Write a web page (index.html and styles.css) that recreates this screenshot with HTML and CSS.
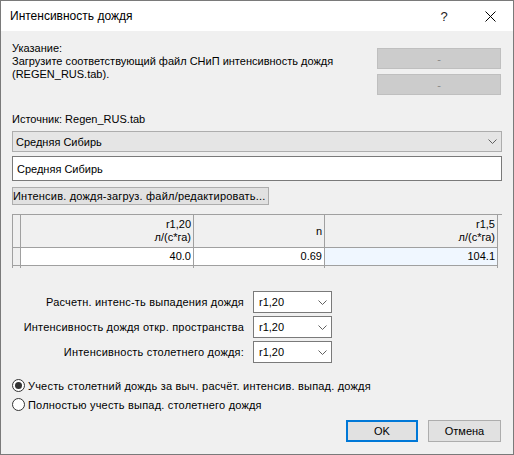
FILE: index.html
```html
<!DOCTYPE html>
<html lang="ru">
<head>
    <meta charset="UTF-8">
    <title>Интенсивность дождя</title>
    <link rel="stylesheet" href="styles.css">
</head>
<body>

    <div class="window">

        <!-- Title Bar -->
        <div class="titlebar">
            <div class="title">Интенсивность дождя</div>
            <div class="caption-btn help">?</div>
            <div class="caption-btn close">
                <svg width="11" height="11" viewBox="0 0 11 11">
                    <path d="M0.5 0.5 L10.5 10.5 M10.5 0.5 L0.5 10.5" stroke="#000" stroke-width="1" fill="none"/>
                </svg>
            </div>
        </div>

        <div class="content">

            <!-- Hint -->
            <div class="hint-row">
                <div class="hint">
                    Указание:<br>
                    Загрузите соответствующий файл СНиП интенсивность дождя<br>
                    (REGEN_RUS.tab).
                </div>
                <div class="side-buttons">
                    <div class="btn-disabled">-</div>
                    <div class="btn-disabled">-</div>
                </div>
            </div>

            <div class="source">Источник: Regen_RUS.tab</div>

            <div class="combo">
                <span>Средняя Сибирь</span>
                <svg class="chevron" width="9" height="5" viewBox="0 0 9 5">
                    <path d="M0.5 0.5 L4.5 4.5 L8.5 0.5" stroke="#606060" fill="none"/>
                </svg>
            </div>

            <div class="textbox">Средняя Сибирь</div>

            <div class="load-btn">Интенсив. дождя-загруз. файл/редактировать...</div>

            <!-- Grid -->
            <div class="grid">
                <div class="cell rowhead"></div>
                <div class="cell head">r1,20<br>л/(с*га)</div>
                <div class="cell head">n</div>
                <div class="cell head">r1,5<br>л/(с*га)</div>

                <div class="cell rowhead"></div>
                <div class="cell data">40.0</div>
                <div class="cell data">0.69</div>
                <div class="cell data current">104.1</div>

                <div class="cell tail"></div>
                <div class="cell tail"></div>
                <div class="cell tail"></div>
                <div class="cell tail"></div>
            </div>

            <!-- Options -->
            <div class="options">
                <div class="opt-label">Расчетн. интенс-ть выпадения дождя</div>
                <div class="select">
                    <span>r1,20</span>
                    <svg width="9" height="5" viewBox="0 0 9 5"><path d="M0.5 0.5 L4.5 4.5 L8.5 0.5" stroke="#606060" fill="none"/></svg>
                </div>

                <div class="opt-label">Интенсивность дождя откр. пространства</div>
                <div class="select">
                    <span>r1,20</span>
                    <svg width="9" height="5" viewBox="0 0 9 5"><path d="M0.5 0.5 L4.5 4.5 L8.5 0.5" stroke="#606060" fill="none"/></svg>
                </div>

                <div class="opt-label">Интенсивность столетнего дождя:</div>
                <div class="select">
                    <span>r1,20</span>
                    <svg width="9" height="5" viewBox="0 0 9 5"><path d="M0.5 0.5 L4.5 4.5 L8.5 0.5" stroke="#606060" fill="none"/></svg>
                </div>
            </div>

            <!-- Radios -->
            <div class="radios">
                <div class="radio">
                    <span class="dot checked"></span>
                    Учесть столетний дождь за выч. расчёт. интенсив. выпад. дождя
                </div>
                <div class="radio">
                    <span class="dot"></span>
                    Полностью учесть выпад. столетнего дождя
                </div>
            </div>

            <!-- Dialog Buttons -->
            <div class="footer">
                <div class="btn ok">OK</div>
                <div class="btn">Отмена</div>
            </div>

        </div>
    </div>

</body>
</html>
```

FILE: styles.css
```css
* {
    margin: 0;
    padding: 0;
    box-sizing: border-box;
}

body {
    font-family: 'Liberation Sans', Arial, sans-serif;
    font-size: 11px;
    color: #000;
    background-color: #fff;
}

.window {
    width: 514px;
    height: 455px;
    border: 1px solid #7a7a7a;
    background-color: #f0f0f0;
    display: flex;
    flex-direction: column;
}

/* Title Bar */
.titlebar {
    height: 30px;
    background-color: #fff;
    display: flex;
    align-items: center;
}

.title {
    flex: 1;
    padding-left: 9px;
    font-size: 12px;
}

.caption-btn {
    width: 46px;
    height: 30px;
    display: flex;
    align-items: center;
    justify-content: center;
}

.help {
    font-size: 13px;
    color: #222;
}

/* Content */
.content {
    padding: 0 11px;
    display: flex;
    flex-direction: column;
}

.hint-row {
    display: flex;
    justify-content: space-between;
    align-items: flex-start;
}

.hint {
    margin-top: 11px;
    line-height: 13px;
}

.side-buttons {
    margin-top: 17px;
    margin-right: 1px;
    display: flex;
    flex-direction: column;
    gap: 5px;
}

.btn-disabled {
    width: 124px;
    height: 21px;
    background-color: #cccccc;
    border: 1px solid #bfbfbf;
    color: #888;
    display: flex;
    align-items: center;
    justify-content: center;
}

.source {
    margin-top: 18px;
    line-height: 13px;
}

.combo {
    margin-top: 5px;
    height: 21px;
    background-color: #e5e5e5;
    border: 1px solid #adadad;
    display: flex;
    align-items: center;
    justify-content: space-between;
    padding: 0 4px 0 3px;
}

.textbox {
    margin-top: 4px;
    height: 25px;
    background-color: #fff;
    border: 1px solid #7a7a7a;
    display: flex;
    align-items: center;
    padding-left: 4px;
}

.load-btn {
    margin-top: 6px;
    align-self: flex-start;
    width: 257px;
    height: 18px;
    background-color: #e1e1e1;
    border: 1px solid #adadad;
    display: flex;
    align-items: center;
    white-space: nowrap;
    overflow: hidden;
    letter-spacing: 0.2px;
}

/* Grid */
.grid {
    margin-top: 9px;
    width: 490px;
    display: grid;
    grid-template-columns: 8px 173px 131px 173px;
    grid-template-rows: 33px 18px 2px;
    border-left: 1px solid #a0a0a0;
    border-top: 1px solid #a0a0a0;
}

.cell {
    border-right: 1px solid #a0a0a0;
    border-bottom: 1px solid #a0a0a0;
    display: flex;
    align-items: center;
    justify-content: flex-end;
    text-align: right;
    padding-right: 2px;
    line-height: 13px;
}

.rowhead {
    background-color: #f0f0f0;
}

.head {
    background-color: #f0f0f0;
}

.data {
    background-color: #fff;
}

.data.current {
    background-color: #f0f7ff;
}

.tail {
    border-bottom: none;
}

/* Options */
.options {
    margin-top: 23px;
    display: grid;
    grid-template-columns: 232px 79px;
    column-gap: 9px;
    row-gap: 3px;
    align-items: center;
}

.opt-label {
    text-align: right;
    letter-spacing: 0.2px;
}

.select {
    height: 22px;
    background-color: #fff;
    border: 1px solid #7a7a7a;
    display: flex;
    align-items: center;
    justify-content: space-between;
    padding: 0 4px 0 5px;
}

/* Radios */
.radios {
    margin-top: 16px;
    display: flex;
    flex-direction: column;
    gap: 6px;
    letter-spacing: 0.2px;
}

.radio {
    display: flex;
    align-items: center;
    gap: 3px;
}

.dot {
    width: 13px;
    height: 13px;
    border: 1px solid #333;
    border-radius: 50%;
    background-color: #fff;
    display: flex;
    align-items: center;
    justify-content: center;
}

.dot.checked::after {
    content: '';
    width: 7px;
    height: 7px;
    border-radius: 50%;
    background-color: #333;
}

/* Footer */
.footer {
    margin-top: 9px;
    display: flex;
    justify-content: flex-end;
    gap: 10px;
    padding-right: 1px;
}

.btn {
    width: 73px;
    height: 22px;
    background-color: #e1e1e1;
    border: 1px solid #adadad;
    display: flex;
    align-items: center;
    justify-content: center;
}

.btn.ok {
    width: 72px;
    border: 2px solid #0078d7;
}
```
